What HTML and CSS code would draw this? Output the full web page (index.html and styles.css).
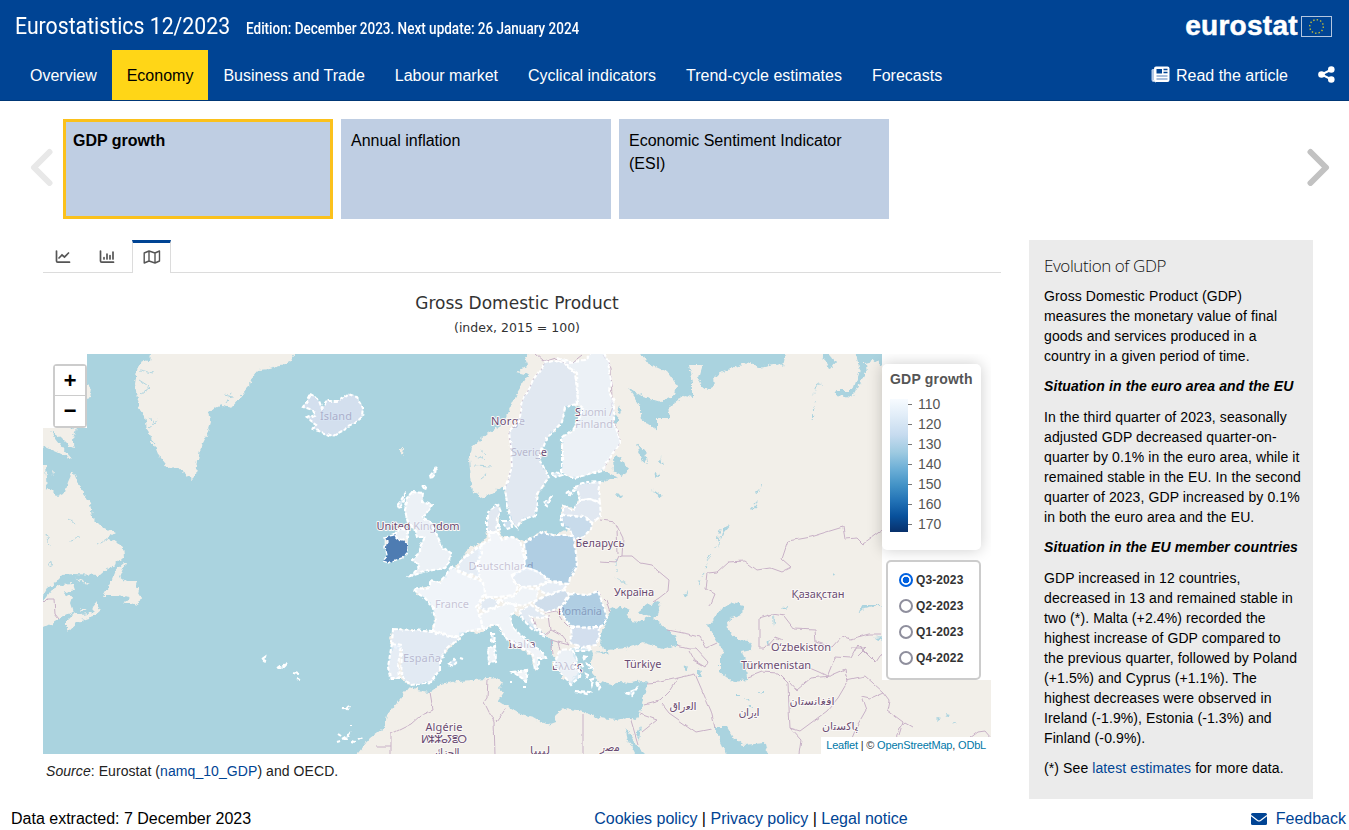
FILE: index.html
```html
<!DOCTYPE html>
<html lang="en">
<head>
<meta charset="utf-8">
<title>Eurostatistics 12/2023</title>
<link rel="stylesheet" href="styles.css">
</head>
<body>
<header class="header">
  <div class="brand-row">
    <div class="brand"><h1 class="title">Eurostatistics 12/2023</h1><span class="edition">Edition: December 2023. Next update: 26 January 2024</span></div>
    <div class="logo"><span class="logo-text">eurostat</span>
      <svg class="flag" width="31" height="21" viewBox="0 0 31 21"><rect x=".5" y=".5" width="30" height="20" fill="#004494" stroke="#b4c6df"/><circle cx="15.5" cy="10.5" r="6.8" fill="none" stroke="#c3bd35" stroke-width="1.4" stroke-dasharray="1.4 2.16"/></svg>
    </div>
  </div>
  <nav class="nav">
    <div class="nav-items"><a>Overview</a><a class="active">Economy</a><a>Business and Trade</a><a>Labour market</a><a>Cyclical indicators</a><a>Trend-cycle estimates</a><a>Forecasts</a></div>
    <div class="nav-tools">
      <svg class="news" width="19" height="17" viewBox="0 0 19 17"><path d="M3 3H1.700Q.5 3 .5 4.500V13.500Q.5 16 3 16" fill="#b4c9e6"/><path d="M2.500 14Q3.500 16 5 16" stroke="#fff" fill="none"/><rect x="3" y=".5" width="15.500" height="15.500" rx="2" fill="#fff"/><rect x="5.500" y="3" width="5.500" height="4.500" fill="#004494"/><path d="M12.500 3.500H16.500M12.500 6.500H16.500" stroke="#004494" stroke-width="1.300"/><path d="M5.500 10H16.500M5.500 13H16.500" stroke="#8dabd2" stroke-width="1.500"/></svg>
      <span>Read the article</span>
      <svg class="share" width="17" height="17" viewBox="0 0 17 17"><path d="M13.500 3.500L3.500 8.500L13.500 13.500" fill="none" stroke="#fff" stroke-width="2"/><g fill="#fff"><circle cx="3.500" cy="8.500" r="3.300"/><circle cx="13.300" cy="3.500" r="3.300"/><circle cx="13.300" cy="13.500" r="3.300"/></g></svg>
    </div>
  </nav>
</header>

<section class="carousel">
  <svg class="arrow prev" width="23" height="38" viewBox="0 0 23 38"><path d="M19.500 4L4 19.500L19.500 35" fill="none" stroke="#e8e8e8" stroke-width="6" stroke-linecap="round" stroke-linejoin="round"/></svg>
  <div class="cards">
    <div class="card selected">GDP growth</div>
    <div class="card">Annual inflation</div>
    <div class="card">Economic Sentiment Indicator (ESI)</div>
  </div>
  <svg class="arrow next" width="23" height="38" viewBox="0 0 23 38"><path d="M3.500 4L19 19.500L3.500 35" fill="none" stroke="#c2c2c2" stroke-width="6" stroke-linecap="round" stroke-linejoin="round"/></svg>
</section>

<main class="main">
  <section class="chart">
    <div class="tabs">
      <div class="tab"><svg width="16" height="14" viewBox="0 0 16 14" fill="none" stroke="#555" stroke-width="1.700" stroke-linecap="round"><path d="M1.500 1V11Q1.500 12.200 2.700 12.200H14.500"/><path d="M4 8L7 5L9.500 7L13.500 3"/></svg></div>
      <div class="tab bars"><svg width="16" height="14" viewBox="0 0 16 14" fill="none" stroke="#555" stroke-width="1.700" stroke-linecap="round"><path d="M1.500 1V11Q1.500 12.200 2.700 12.200H14.500"/><path d="M5 7.500V9M8 4V9M11 5.500V9M14 2V9"/></svg></div>
      <div class="tab active"><svg width="18" height="14" viewBox="0 0 18 14" fill="none" stroke="#555" stroke-width="1.400" stroke-linejoin="round"><path d="M1.200 3L6 1L12 3L16.500 1V11L12 13L6 11L1.200 13ZM6 1V11M12 3V13"/></svg></div>
    </div>
    <h2 class="chart-title">Gross Domestic Product</h2>
    <div class="chart-sub">(index, 2015 = 100)</div>
    <div class="map">
      <svg class="map-canvas" width="948" height="400" viewBox="43 354 948 400">
        <defs>
          <filter id="coast" x="43" y="354" width="948" height="400" filterUnits="userSpaceOnUse" color-interpolation-filters="sRGB"><feTurbulence type="fractalNoise" baseFrequency=".2" numOctaves="3" seed="4" result="n"/><feDisplacementMap in="SourceGraphic" in2="n" scale="6" xChannelSelector="R" yChannelSelector="G"/></filter>
          <filter id="edge" x="43" y="354" width="948" height="400" filterUnits="userSpaceOnUse" color-interpolation-filters="sRGB"><feTurbulence type="fractalNoise" baseFrequency=".09" numOctaves="2" seed="7" result="n"/><feDisplacementMap in="SourceGraphic" in2="n" scale="4" xChannelSelector="R" yChannelSelector="G"/></filter>
        </defs>
        <rect x="43" y="354" width="948" height="400" fill="#aad3df"/>
        <g filter="url(#coast)">
          <g fill="#f2efe9">
            <path d="M152 344L150 362 142 361 137 370 135 383 137 400 140 410 145 417 147 428 150 437 156 448 160 458 168 468 177 467 183 472 192 479 196 475 198 460 201 447 207 435 211 422 208 413 215 407 223 405 232 407 240 398 248 388 252 377 258 370 270 369 280 366 290 362 302 344Z"/>
            <path d="M80 383L87 385 92 391 90 397 80 399ZM30 420L76 428 73 440 75 448 70 447 60 437 50 431 63 448 72 459 57 452 30 440ZM30 465H45L47 490 30 495ZM52 471L55 472 53 475Z"/>
            <path d="M30 492L50 489 57 496 65 492 68 482 73 471 78 483 83 493 90 503 92 517 102 527 115 533 106 539 113 540 123 547 124 557 115 565 108 568 100 575 73 574 62 575 57 582 48 587 43 596 30 598V630L43 628 53 623 63 617 73 612 70 603 72 597 63 593 75 590 73 584 60 585 50 591 43 600 30 600Z"/>
            <path d="M65 622L75 612 83 615 92 613 93 607 97 602 97 607 101 610 93 617 78 622 68 631 65 627ZM123 563L126 563 120 577 127 582 137 582 135 588 139 588 138 593 141 598 138 605 131 603 123 603 130 598 117 596 103 596 108 587 112 580 117 568ZM74 577L90 584 83 583ZM75 604L80 609 88 609 82 611Z"/>
            <path d="M540 340H1010V770H355L358 753 370 738 385 727 387 715 397 703 405 692 409 687 417 690 430 692 440 685 457 681 473 680 487 679 498 678 503 682 499 688 503 693 498 701 507 707 517 713 533 717 547 725 555 722 557 712 567 708 583 712 600 718 617 720 627 717 635 720 640 713 643 700 647 683 643 681 630 683 620 682 612 685 600 682 592 673 592 660 593 651 583 647 570 649 574 655 580 668 575 677 570 683 562 677 557 663 552 653 552 640 543 633 533 625 523 618 517 615 513 612 510 615 513 627 522 637 530 645 543 653 545 658 538 658 538 667 535 670 530 655 517 645 507 640 502 633 498 625 492 625 483 630 477 633 467 631 459 633 460 640 448 648 440 660 440 670 430 682 410 685 400 678 390 678 388 667 393 647 389 638 393 629 413 630 432 632 435 620 433 608 423 597 413 590 430 587 430 580 440 582 452 570 460 562 470 547 482 543 488 532 487 513 498 505 500 513 498 527 503 537 513 537 523 542 543 532 557 535 570 528 563 523 561 515 563 505 573 510 580 500 575 487 587 483 600 482 617 477 602 470 575 478 562 473 562 438 572 430 580 417 583 408 573 405 565 408 562 422 547 438 539 458 549 478 538 493 535 515 522 520 518 528 512 523 507 503 505 487 502 485 493 493 483 498 473 492 471 477 469 460 472 447 488 433 502 425 510 408 517 393 528 375 517 372 528 366 525 358Z"/>
            <path d="M398 449L404 449 403 455ZM401 457L403 460Z"/>
          </g>
          <g fill="#aad3df">
            <path d="M636 344L647 363 667 372 677 385 675 395 660 402 643 397 628 387 640 405 642 420 657 430 657 418 670 418 668 407 685 395 693 397 693 383 689 365 703 365 698 382 707 389 714 387 713 377 723 372 750 362 757 367 780 363 783 366 788 344ZM815 344L830 369 835 362 820 344ZM853 344L858 362 860 370 853 390 835 390 837 396 852 398 858 387 866 373 865 363 877 360 890 380V344Z"/>
            <path d="M613 458L620 457 628 468 623 476 614 471ZM637 444L645 450 647 464 641 459ZM654 473L660 474 656 477ZM652 489L662 496 659 498ZM616 494L622 495 619 498ZM614 413L619 420 614 425ZM619 405L621 412 617 414ZM661 457L663 465 660 462Z"/>
            <path d="M602 630L610 610 620 605 630 610 627 613 632 622 638 623 650 617 640 614 642 607 663 600 657 607 660 612 653 618 667 630 677 637 677 645 667 649 643 643 627 648 607 650 600 645ZM594 653L609 651 607 654Z"/>
            <path d="M708 625L720 610 733 602 743 605 742 615 727 621 728 630 737 640 749 641 752 650 742 652 747 667 748 680 733 682 720 672 720 657 725 653 713 635Z"/>
            <path d="M715 727L727 727 733 737 743 745 765 743 770 764H732L720 740ZM626 728L635 743 652 760H638L627 738ZM641 727L639 740 636 735ZM859 613L864 605 884 605 864 609ZM874 638L884 637 883 641Z"/>
            <path d="M736 695h4v2h-4zM745 698h5l-2 3zM757 691h6v2zM748 706l4-2v4zM698 668l4 8h-4zM682 667l7-1-3 4zM686 699l3 5zM773 614l2 6-1 7zM783 607l7-1-4 4zM766 643l4-2-1 5zM832 573l3 1-2 3zM805 571l3 3zM717 536l3 5-1 7zM684 595l3-4-1 6zM613 575l16 11-6-3zM680 609l10 3zM859 402l3-2zM812 400l4-14 6-4-6 6zM720 540l3-12 7-3-6 7zM750 510l8-9-3 7zM912 723l6-2zM935 718l6 1-3 2zM946 714l4 1-3 2zM954 721l4 1-3 1zM948 692l5-2zM966 689l3-1zM925 720l4-1z"/>
          </g>
          <g fill="none" stroke="#aad3df" stroke-width=".9"><path d="M140 370L153 373M139 380L150 387M141 394L150 387M148 417L157 424M150 427L159 420M224 395L234 397M226 403L232 393M98 544L112 536M70 540L80 537M46 534L49 546M68 518L76 524M475 456L485 460M474 466L492 467M480 450L487 455M481 478L486 474"/><circle cx="50" cy="564" r="2.500"/></g>
          <g fill="none" stroke="#aad3df" stroke-width="1" stroke-dasharray="5 4"><path d="M710 555L701 580 698 588M616 560V572M720 529L716 548M812 420L815 400M757 494L763 484"/></g>
        </g>
        <g class="base" filter="url(#edge)" fill="#f2efe9">
          <path d="M311 394L318 398 322 409 327 401 338 401 348 394 357 397 363 408 362 417 353 425 333 436 313 429 317 425 307 418 315 415 313 410 303 407 308 400ZM412 492L423 493 422 502 432 505 423 518 431 523 437 535 442 547 451 553 450 562 445 568 433 570 423 572 410 576 420 565 413 560 420 553 420 547 425 537 417 537 415 530 408 523 405 510 408 497ZM393 536L400 528 408 531 408 538 406 552 402 557 388 562 383 560 389 555 385 547 385 537ZM488 649L495 645 496 662 489 664ZM513 672L528 670 526 681Z"/>
        </g>
        <g filter="url(#edge)" fill="none" stroke="#c8b1c7" stroke-width="1">
          <path d="M43 603L47 599 54 599 55 614 59 619M535 354L544 362 557 358 564 364 573 362 582 355M603 355L611 368 612 400 614 420 620 442 604 468M506 487L512 470 511 448 509 432 519 422 523 400 533 380 545 363M600 520L615 522 623 538 622 556 632 556 640 563 651 565 669 580 668 591 659 598 653 602M600 562L616 563 619 557 622 556M597 591L606 600 610 612M710 606L715 594 706 589 708 573 717 572 728 562 745 561 757 570 770 568 781 572 791 567 782 559 788 541 810 537 843 527 845 539 857 538 863 544 882 530M668 630L688 634 700 637 706 648 717 643M677 645L689 648 696 648 708 661 705 667 695 661 689 650M693 661L702 666M647 683L660 682 678 678 695 674 701 688 711 711 715 727M759 648V618L773 614 784 616 794 629 815 630 816 642 832 647 842 636 850 639 869 634 882 634M759 648H765L775 637 783 640M748 677L761 672 778 673 788 683 789 708 790 728 801 740 799 754M789 681L797 690 811 678 830 676 846 669 848 681 838 698 827 711 800 731 790 728M827 677L835 657 851 658 858 645 868 655 876 663 882 654M850 648L865 648 858 655M846 680L865 676 883 692 870 698 861 696 866 710 858 724 849 745M883 692L889 700 887 710 903 722 899 735M645 704L660 700 671 689 678 678M662 704L669 713 696 732 711 729M640 714L657 720 642 732M430 692L433 710 420 716 411 724 391 734 391 754M376 746H391M488 679L487 698 484 702 494 722 495 754M507 707L496 722M583 714V754M630 717L638 744M795 662L819 672 827 676M616 530L617 554M896 738L899 728 905 723 912 727M970 738L978 732 985 731 991 738M532 616L536 628 545 635 551 630 549 615M551 630L562 636 569 645 558 642 551 640 553 654M545 613L556 611 562 620 569 627M558 642L560 650"/>
        </g>
        <g class="labels">
          <text x="336" y="420" textLength="32">Ísland</text><text x="508" y="425" textLength="34">Norge</text><text x="529" y="456" textLength="36">Sverige</text><text x="594" y="416" textLength="38">Suomi /</text><text x="594" y="428" textLength="38">Finland</text>
          <text x="418" y="530" textLength="83">United Kingdom</text><text x="600" y="547" textLength="49">Беларусь</text><text x="501" y="570" textLength="65">Deutschland</text><text x="452" y="608" textLength="34">France</text><text x="580" y="615" textLength="44">România</text><text x="422" y="662" textLength="38">España</text><text x="522" y="648" textLength="27">Italia</text><text x="567" y="670" textLength="30">Ελλάς</text>
          <text x="634" y="596" textLength="40">Україна</text><text x="643" y="668" textLength="37">Türkiye</text><text x="818" y="598" textLength="53">Қазақстан</text><text x="801" y="651" textLength="60">Oʻzbekiston</text><text x="776" y="669" textLength="70">Türkmenistan</text>
          <text x="683" y="710" textLength="27">العراق</text><text x="749" y="716" textLength="21">ایران</text><text x="812" y="705" textLength="45">افغانستان</text><text x="840" y="730" textLength="36">پاکستان</text><text x="444" y="731" textLength="37">Algérie</text><text x="444" y="743" textLength="46">ⵍⵣⵣⴰⵢⴻⵔ</text><text x="446" y="756" textLength="27">الجزائر</text><text x="540" y="754" textLength="20">ليبيا</text><text x="610" y="751" textLength="20">مصر</text>
        </g>
        <g class="regions" filter="url(#edge)">
          <path fill="#c6d8ef" d="M311 394L318 398 322 409 327 401 338 401 348 394 357 397 363 408 362 417 353 425 333 436 313 429 317 425 307 418 315 415 313 410 303 407 308 400Z"/>
          <path fill="#dae6f4" d="M558 360L568 366 575 373 577 390 578 404 573 405 565 408 562 422 547 438 539 458 549 478 538 493 535 515 522 520 518 528 512 523 507 503 505 487 512 470 511 448 509 432 519 422 523 400 533 380 545 363ZM544 503l7-6-3 9z"/>
          <path fill="#eaf2fb" d="M558 357L570 362 584 361 594 350 603 350 608 362 611 380 609 392 614 402 614 425 620 443 602 470 575 478 562 473 562 438 572 430 580 417 583 408 578 404 577 373ZM552 474l5-3 5 4-6 2z"/>
          <path fill="#dae6f4" d="M575 487L587 483 600 482 598 492 600 502 590 499 580 500ZM563 505L573 510 580 500 590 499 600 503 601 516 593 522 583 517 563 515ZM567 493L574 489 570 495Z"/>
          <path fill="#b7d3eb" d="M561 516L583 517 592 523 591 529 584 536 573 540 570 529 563 525Z"/>
          <path fill="#dae6f4" d="M487 532L487 513 498 505 501 512 497 519 496 532ZM503 520L511 520 512 527 506 529ZM498 524L501 529 498 530Z"/>
          <path fill="#f2f8ff" d="M482 543L490 541 489 533 498 533 502 540 512 537 520 541 524 557 526 568 512 576 517 586 513 595 500 597 486 597 483 580 477 574 479 553Z"/>
          <path fill="#94c1df" d="M524 543L543 532 556 536 572 536 576 552 577 567 570 578 569 583 550 581 543 575 531 569 526 568Z"/>
          <path fill="#e1ecfa" d="M466 556L481 545 482 553 477 564 479 578 470 575 457 570 460 562Z"/>
          <path fill="#e1ecfa" d="M512 575L526 568 531 569 541 573 548 581 537 586 520 587ZM537 589L547 582 568 584 562 591 546 594Z"/>
          <path fill="#eff6ff" d="M452 567L461 573 472 578 484 582 485 594 476 607 480 614 483 630 467 631 459 637 433 631 435 620 433 608 423 597 413 590 430 587 430 580 440 582ZM492 634l3 0-1 8-3-2z"/>
          <path fill="#dce8f6" d="M481 602L488 597 498 601 494 608 485 611 479 608Z"/>
          <path fill="#f0f7fe" d="M498 600L513 596 522 587 538 590 537 600 525 605 510 603Z"/>
          <path fill="#f0f7fe" d="M480 615L493 609 505 603 515 604 516 612 510 615 513 627 522 637 530 645 543 653 545 658 538 658 538 667 535 670 533 655 517 645 507 640 502 633 498 625 492 625 483 630ZM488 649L495 645 496 662 489 664ZM513 672L528 670 526 681Z"/>
          <path fill="#c0d6eb" d="M535 602L547 595 565 590 569 594 560 608 546 612 536 607Z"/>
          <path fill="#94c1df" d="M560 610L571 594 588 595 598 591 604 607 607 618 600 627 582 628 570 627Z"/>
          <path fill="#c6d8ef" d="M570 628L600 627 599 635 596 645 582 647 571 643Z"/>
          <path fill="#dce8f6" d="M519 610L531 606 538 611 548 617 541 618 530 617 535 627 545 636 533 629 523 620Z"/>
          <path fill="#dce8f6" d="M393 629L413 630 432 632 459 638 448 648 440 660 440 670 430 682 410 685 401 677 402 650 392 643ZM448 664l6-5 3 3-4 4zM460 657l3 1z"/>
          <path fill="#e1ecfa" d="M392 643L402 645 398 665 399 678 390 678 388 667Z"/>
          <path fill="#eaf2fb" d="M412 492L423 493 422 502 432 505 423 518 431 523 437 535 442 547 451 553 450 562 445 568 433 570 423 572 410 576 420 565 413 560 420 553 420 547 425 537 417 537 415 530 408 523 405 510 408 497ZM393 536L400 528 408 531 408 538 402 540ZM398 505L405 494 405 500 400 509ZM430 475L436 467 435 474 431 479ZM422 485h5l-2 5z"/>
          <path class="thin" fill="#084c9a" d="M384 537L394 535 398 539 404 540 407 544 407 553 402 558 388 563 382 561 387 555 385 547 388 542Z"/>
          <path fill="#eaf2fb" d="M553 665L561 650 582 647 591 648 587 651 573 651 577 660 573 665 580 670 579 678 571 684 563 675ZM575 691L590 692 587 694ZM584 656l4 1-3 2zM588 664l5 3-4 1zM585 674l4 2-3 2zM591 680l3-1-2 6zM596 683l5 3-2 3zM581 665l3 4zM625 694L637 689 632 696Z"/>
          <path fill="#f2f8ff" d="M262 659l3-2-1 4zM277 668l3-2 7-2-4 4zM293 673l6 1zM297 679l3 1zM342 708l5 0 3-3-2 4zM350 726h2zM338 734l3 2zM337 742l3-1zM342 739l7-4-2 4zM351 741l4 1zM358 739l4-2zM510 682h2zM523 687h3"/>
        </g>
        <path d="M43 354H87V428H43ZM882 354H991V680H882Z" fill="#fff"/>
      </svg>
      <div class="zoom-control"><button>+</button><button>−</button></div>
      <div class="legend">
        <div class="legend-title">GDP growth</div>
        <div class="scale"><div class="ramp"></div><ul><li>110</li><li>120</li><li>130</li><li>140</li><li>150</li><li>160</li><li>170</li></ul></div>
      </div>
      <div class="periods">
        <label><i class="radio checked"></i>Q3-2023</label><label><i class="radio"></i>Q2-2023</label><label><i class="radio"></i>Q1-2023</label><label><i class="radio"></i>Q4-2022</label>
      </div>
      <div class="attribution"><a>Leaflet</a> | © <a>OpenStreetMap</a>, <a>ODbL</a></div>
    </div>
    <div class="source"><em>Source</em>: Eurostat (<a>namq_10_GDP</a>) and OECD.</div>
  </section>

  <aside class="side">
    <h3>Evolution of GDP</h3>
    <p>Gross Domestic Product (GDP)<br>measures the monetary value of final<br>goods and services produced in a<br>country in a given period of time.</p>
    <h4>Situation in the euro area and the EU</h4>
    <p>In the third quarter of 2023, seasonally<br>adjusted GDP decreased quarter-on-<br>quarter by 0.1% in the euro area, while it<br>remained stable in the EU. In the second<br>quarter of 2023, GDP increased by 0.1%<br>in both the euro area and the EU.</p>
    <h4>Situation in the EU member countries</h4>
    <p>GDP increased in 12 countries,<br>decreased in 13 and remained stable in<br>two (*). Malta (+2.4%) recorded the<br>highest increase of GDP compared to<br>the previous quarter, followed by Poland<br>(+1.5%) and Cyprus (+1.1%). The<br>highest decreases were observed in<br>Ireland (-1.9%), Estonia (-1.3%) and<br>Finland (-0.9%).</p>
    <p>(*) See <a>latest estimates</a> for more data.</p>
  </aside>
</main>

<footer class="footer">
  <span>Data extracted: 7 December 2023</span>
  <span class="links"><a>Cookies policy</a> | <a>Privacy policy</a> | <a>Legal notice</a></span>
  <a class="feedback"><svg width="16" height="12" viewBox="0 0 16 12"><rect width="16" height="12" rx="1.500" fill="#004494"/><path d="M0 2.500L6.500 7.500Q8 8.500 9.500 7.500L16 2.500" fill="none" stroke="#fff" stroke-width="1.200"/></svg>Feedback</a>
</footer>
</body>
</html>
```
FILE: styles.css
```css
* { box-sizing: border-box; }
body { margin: 0; width: 1349px; height: 830px; overflow: hidden; background: #fff; color: #000; font: 16px/20px "Liberation Sans", Arial, sans-serif; display: flex; flex-direction: column; }
a { color: #004494; }
h1, h2, h3, h4, p, ul { margin: 0; padding: 0; font-weight: normal; }

.header { height: 101px; background: #004494; border-bottom: 1px solid #003776; color: #fff; flex: none; }
.brand-row { height: 50px; display: flex; justify-content: space-between; padding: 0 17px 0 15px; }
.brand { display: flex; font-family: Roboto, sans-serif; white-space: nowrap; }
.title { width: 231px; font-size: 24px; line-height: 52px; transform: scaleX(.885); transform-origin: 0 0; }
.edition { font-size: 16px; line-height: 58px; font-weight: 500; transform: scaleX(.845); transform-origin: 0 0; }
.logo { display: flex; align-items: center; gap: 3px; padding-top: 3px; }
.logo-text { font: bold 28px/38px "Liberation Sans", Arial, sans-serif; letter-spacing: .3px; -webkit-text-stroke: .5px #fff; padding-bottom: 2px; }
.nav { height: 50px; display: flex; justify-content: space-between; padding: 0 14px 0 15px; }
.nav-items { display: flex; }
.nav a { color: #fff; padding: 0 15px; line-height: 51px; white-space: nowrap; }
.nav a.active { background: #ffd617; color: #000; }
.nav-tools { display: flex; align-items: center; gap: 6px; line-height: 51px; }
.news, .share { margin-top: -2px; }
.share { margin-left: 24px; }

.carousel { height: 139px; flex: none; display: flex; padding: 18px 19px 0 30px; }
.arrow { margin-top: 29px; flex: none; }
.cards { display: flex; gap: 8px; flex: 1; margin-left: 10px; }
.card { width: 270px; height: 100px; background: #bfcee3; padding: 10px; line-height: 23px; }
.selected { border: 3px solid #fbc11c; padding: 7px; font-weight: bold; }

.main { height: 559px; flex: none; display: flex; padding-left: 43px; }
.chart { width: 958px; margin-right: 28px; }
.tabs { height: 33px; display: flex; border-bottom: 1px solid #dcdcdc; }
.tab { width: 45px; display: flex; align-items: center; justify-content: center; padding-right: 6px; height: 33px; }
.bars { width: 44px; }
.tab.active { width: 39px; border: 1px solid #dcdcdc; border-top: 3px solid #004494; border-bottom: 0; background: #fff; padding: 0 0 3px; }
.chart-title { font: 17px/22px "DejaVu Sans", sans-serif; width: 948px; text-align: center; color: #333; margin-top: 19px; }
.chart-sub { font: 12.500px/18px "DejaVu Sans", sans-serif; width: 948px; text-align: center; color: #333; margin-top: 5px; }
.map { position: relative; width: 948px; height: 400px; margin-top: 17px; overflow: hidden; }
.map-canvas { display: block; }
.labels text { font: 11px "Noto Sans", "DejaVu Sans", sans-serif; fill: #6a4b72; text-anchor: middle; stroke: #faf8f6; stroke-width: 2px; paint-order: stroke; stroke-linejoin: round; }
.base { stroke: #fff; stroke-opacity: .6; stroke-width: 1; }
.regions { stroke: #fff; stroke-width: 2.100; stroke-dasharray: 4 2; fill-opacity: .7; }
.regions .thin { stroke-width: 1.400; }
.zoom-control { position: absolute; left: 10px; top: 10px; width: 34px; height: 64px; border: 2px solid #ccc; border-radius: 4px; background: #fff; }
.zoom-control button { display: block; width: 30px; height: 30px; padding: 0; border: 0; background: #fff; font: bold 22px/34px "Liberation Mono", monospace; color: #000; }
.zoom-control button:first-child { border-bottom: 1px solid #ccc; }
.legend { position: absolute; left: 839px; top: 10px; width: 99px; height: 186px; background: #fff; border-radius: 5px; box-shadow: 0 0 15px rgba(0,0,0,.2); padding: 6px 8px; color: #555; }
.legend-title { font-weight: bold; font-size: 14px; line-height: 18px; letter-spacing: .2px; white-space: nowrap; }
.scale { display: flex; padding-top: 11px; }
.ramp { width: 18px; height: 133px; background: linear-gradient(#f7fbff, #deebf7 14%, #c6dbef 27%, #9ecae1 40%, #6baed6 53%, #4292c6 65%, #2171b5 77%, #08519c 88%, #08306b); }
.legend ul { list-style: none; font-size: 14px; line-height: 20px; margin-top: -5px; }
.legend li { display: flex; align-items: center; gap: 6px; }
.legend li::before { content: ""; width: 4px; height: 1px; background: #777; }
.periods { position: absolute; left: 843px; top: 206px; width: 95px; height: 120px; border: 2px solid #ccc; border-radius: 5px; background: #fff; padding: 5px 0 0 11px; }
.periods label { display: flex; align-items: center; gap: 3px; height: 26px; color: #333; font: bold 12px/26px "Liberation Sans", Arial, sans-serif; letter-spacing: .1px; }
.radio { width: 14px; height: 14px; border: 2px solid #8f8f9d; border-radius: 50%; }
.checked { border-color: #0061e0; background: radial-gradient(circle, #0061e0 3px, #fff 3.600px); }
.attribution { position: absolute; right: 0; bottom: 0; background: #fff; font-size: 11px; letter-spacing: -.19px; line-height: 17px; padding: 0 5px; color: #333; white-space: nowrap; }
.attribution a { color: #0078a8; }
.source { padding: 7px 0 0 3px; font-size: 14px; letter-spacing: .07px; color: #222; }

.side { width: 284px; background: #ebebeb; padding: 16px 0 0 15px; font-size: 14px; letter-spacing: .1px; white-space: nowrap; }
.side h3 { font: 300 17px/20px "Open Sans", sans-serif; letter-spacing: -.42px; color: #111; margin-bottom: 10px; }
.side p { margin-bottom: 10px; }
.side h4 { font-weight: bold; font-style: italic; font-size: 14px; letter-spacing: .12px; margin-bottom: 11px; }

.footer { height: 31px; display: flex; justify-content: space-between; align-items: flex-start; padding: 10px 3px 0 11px; }
.feedback { display: flex; align-items: center; gap: 9px; }
```
